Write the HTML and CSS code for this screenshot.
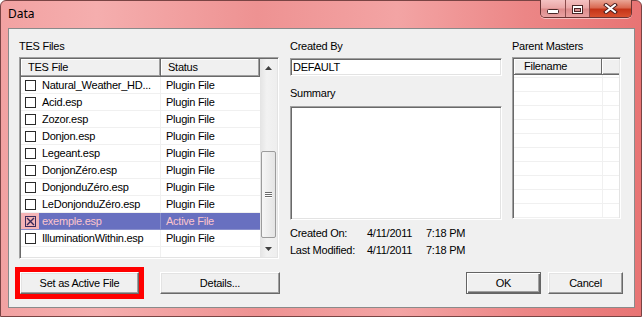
FILE: index.html
```html
<!DOCTYPE html>
<html>

<head>
    <meta charset="UTF-8">
    <title>Data</title>
    <link rel="stylesheet" href="styles.css">
</head>

<body>
    <div class="window">
        <div class="titlebar">
            <span class="title">Data</span>
            <div class="caption">
                <span class="cap-btn min">
                    <svg width="12" height="5" viewBox="0 0 12 5"><rect x=".5" y=".5" width="11" height="4" rx="1" fill="#fff" stroke="#4a2626"/></svg>
                </span>
                <span class="cap-btn max">
                    <svg width="11" height="9" viewBox="0 0 11 9"><rect x=".5" y=".5" width="10" height="8" fill="#fff" stroke="#4a2626"/><rect x="2.5" y="3.5" width="6" height="3" fill="#d89090" stroke="#4a2626"/></svg>
                </span>
                <span class="cap-btn close">
                    <svg width="15" height="11" viewBox="0 0 15 11"><path d="M3 2 L12 9 M12 2 L3 9" stroke="#4a1c1c" stroke-width="4" stroke-linecap="square"/><path d="M3 2 L12 9 M12 2 L3 9" stroke="#fff" stroke-width="2" stroke-linecap="square"/></svg>
                </span>
            </div>
        </div>

        <div class="client">
            <div class="panes">
                <div class="files">
                    <div class="label">TES Files</div>
                    <div class="listbox">
                        <div class="list-main">
                            <div class="hd"><span class="c1">TES File</span><span class="c2">Status</span></div>
                            <div class="row"><span class="c1"><i class="check"></i>Natural_Weather_HD...</span><span class="c2">Plugin File</span></div>
                            <div class="row"><span class="c1"><i class="check"></i>Acid.esp</span><span class="c2">Plugin File</span></div>
                            <div class="row"><span class="c1"><i class="check"></i>Zozor.esp</span><span class="c2">Plugin File</span></div>
                            <div class="row"><span class="c1"><i class="check"></i>Donjon.esp</span><span class="c2">Plugin File</span></div>
                            <div class="row"><span class="c1"><i class="check"></i>Legeant.esp</span><span class="c2">Plugin File</span></div>
                            <div class="row"><span class="c1"><i class="check"></i>DonjonZéro.esp</span><span class="c2">Plugin File</span></div>
                            <div class="row"><span class="c1"><i class="check"></i>DonjonduZéro.esp</span><span class="c2">Plugin File</span></div>
                            <div class="row"><span class="c1"><i class="check"></i>LeDonjonduZéro.esp</span><span class="c2">Plugin File</span></div>
                            <div class="row sel">
                                <span class="c1"><i class="check on"><svg width="11" height="11" viewBox="0 0 11 11"><rect x=".5" y=".5" width="10" height="10" fill="none" stroke="#3a2a5a"/><path d="M2 2 L9 9 M9 2 L2 9" stroke="#3a2a5a" stroke-width="1.4"/></svg></i>exemple.esp</span><span class="c2">Active File</span>
                            </div>
                            <div class="row"><span class="c1"><i class="check"></i>IlluminationWithin.esp</span><span class="c2">Plugin File</span></div>
                            <div class="row"><span class="c1"></span><span class="c2"></span></div>
                        </div>
                        <div class="scrollbar">
                            <div class="sb-btn"><svg width="7" height="4" viewBox="0 0 7 4"><path d="M3.5 0 L7 4 L0 4 Z" fill="#404040"/></svg></div>
                            <div class="sb-track">
                                <div class="thumb"><i></i><i></i><i></i></div>
                            </div>
                            <div class="sb-btn"><svg width="7" height="4" viewBox="0 0 7 4"><path d="M0 0 L7 0 L3.5 4 Z" fill="#404040"/></svg></div>
                        </div>
                    </div>
                </div>

                <div class="info">
                    <div class="label">Created By</div>
                    <div class="field">DEFAULT</div>
                    <div class="label summary-label">Summary</div>
                    <div class="summary"></div>
                    <div class="meta first"><span class="k">Created On:</span><span class="d">4/11/2011</span><span>7:18 PM</span></div>
                    <div class="meta"><span class="k">Last Modified:</span><span class="d">4/11/2011</span><span>7:18 PM</span></div>
                </div>

                <div class="masters">
                    <div class="label">Parent Masters</div>
                    <div class="mlist">
                        <div class="mhd"><span class="m1">Filename</span><span class="m2"></span></div>
                        <div class="mrow short"><span class="m1"></span><span class="m2"></span></div>
                        <div class="mrow"><span class="m1"></span><span class="m2"></span></div>
                        <div class="mrow"><span class="m1"></span><span class="m2"></span></div>
                        <div class="mrow"><span class="m1"></span><span class="m2"></span></div>
                        <div class="mrow"><span class="m1"></span><span class="m2"></span></div>
                        <div class="mrow"><span class="m1"></span><span class="m2"></span></div>
                        <div class="mrow"><span class="m1"></span><span class="m2"></span></div>
                        <div class="mrow"><span class="m1"></span><span class="m2"></span></div>
                        <div class="mrow"><span class="m1"></span><span class="m2"></span></div>
                        <div class="mrow"><span class="m1"></span><span class="m2"></span></div>
                        <div class="mrow"><span class="m1"></span><span class="m2"></span></div>
                    </div>
                </div>
            </div>

            <div class="buttons">
                <button class="btn wide marked">Set as Active File</button>
                <button class="btn wide details">Details...</button>
                <span class="spacer"></span>
                <button class="btn small default">OK</button>
                <button class="btn small cancel">Cancel</button>
            </div>
        </div>
    </div>
</body>
</html>
```

FILE: styles.css
```css
* {
    margin: 0;
    padding: 0;
    box-sizing: border-box;
}

body {
    background: #fff;
    font-family: "Liberation Sans", Arial, sans-serif;
    font-size: 11px;
    letter-spacing: -0.25px;
    color: #000;
}

.window {
    width: 642px;
    height: 317px;
    display: flex;
    flex-direction: column;
    border: 1px solid #7a4444;
    border-radius: 6px 6px 0 0;
    background: linear-gradient(to right, #f2a2a2, #f5aeae 15%, #ee9292 40%, #f3a4a4 62%, #ec8686 82%, #e87474);
}

/* title bar */
.titlebar {
    height: 27px;
    display: flex;
    justify-content: space-between;
    align-items: flex-start;
}

.title {
    padding-left: 7px;
    line-height: 25px;
    font-family: "Noto Sans", "Liberation Sans", sans-serif;
    font-size: 12px;
    letter-spacing: 0;
}

.caption {
    display: flex;
    height: 18px;
    margin-right: 9px;
    margin-top: -1px;
    border: 1px solid #6a3434;
    border-top: 0;
    border-radius: 0 0 5px 5px;
    overflow: hidden;
    box-shadow: 0 1px 0 rgba(255, 255, 255, .5);
}

.cap-btn {
    display: flex;
    justify-content: center;
    align-items: center;
    background: linear-gradient(#f4c2c2, #eaa6a6 48%, #dc8a8a 52%, #e8a2a2);
}

.cap-btn.min {
    width: 25px;
    border-right: 1px solid #8a4c4c;
    padding-top: 6px;
}

.cap-btn.max {
    width: 24px;
    border-right: 1px solid #8a4c4c;
    padding-top: 1px;
}

.cap-btn.close {
    width: 41px;
    background: linear-gradient(#eaa696, #da6a52 45%, #c43418 55%, #d8502e);
}

/* client area */
.client {
    flex: 1;
    margin: 0 6px 8px 7px;
    background: #f0f0f0;
    border: 1px solid #8a8a8a;
    padding: 11px 13px 0 10px;
}

.panes {
    display: flex;
    align-items: flex-start;
}

.label {
    height: 13px;
    line-height: 13px;
}

.files {
    width: 260px;
    margin-right: 11px;
}

.info {
    width: 212px;
    margin-right: 10px;
}

.masters {
    width: 109px;
}

/* sunken boxes */
.listbox,
.field,
.summary,
.mlist {
    background: #fff;
    border: 1px solid;
    border-color: #a0a0a0 #fff #fff #a0a0a0;
    padding: 1px;
    box-shadow: inset 1px 1px #696969, inset -1px -1px #e3e3e3;
}

.listbox {
    display: flex;
    height: 202px;
    margin-top: 4px;
}

.list-main {
    width: 239px;
    overflow: hidden;
}

.hd {
    display: flex;
    height: 18px;
}

.hd span {
    line-height: 16px;
    padding-left: 7px;
    background: #f0f0f0;
    border-right: 1px solid #696969;
    border-bottom: 1px solid #696969;
    box-shadow: inset -1px -1px #a0a0a0, inset 1px 1px #fff;
}

.c1 {
    width: 140px;
}

.c2 {
    width: 99px;
}

.row {
    display: flex;
    height: 17px;
}

.row span {
    display: flex;
    align-items: center;
    height: 17px;
    border-bottom: 1px solid #f0f0f0;
    white-space: nowrap;
}

.row .c1 {
    padding-left: 4px;
    border-right: 1px solid #f0f0f0;
}

.row .c2 {
    padding-left: 5px;
}

.check {
    display: block;
    width: 11px;
    height: 11px;
    margin-right: 6px;
    border: 1px solid #2a2a2a;
}

.check.on {
    border: 0;
}

.check svg {
    display: block;
}

.row.sel span {
    color: #fcc4cc;
    background: #6870c0;
    border-color: #8a90cc;
}

.row.sel .c1 {
    background: linear-gradient(to right, #f4b4b6 18px, #6870c0 18px);
}

/* scrollbar */
.scrollbar {
    width: 17px;
    display: flex;
    flex-direction: column;
    background: linear-gradient(to right, #e4e4e4, #f2f2f2 40%, #eeeeee);
}

.sb-btn {
    height: 17px;
    display: flex;
    justify-content: center;
    align-items: center;
}

.sb-track {
    flex: 1;
    padding: 75px 1px 0;
}

.thumb {
    height: 87px;
    border: 1px solid #9c9c9c;
    border-radius: 2px;
    background: linear-gradient(to right, #f6f6f6, #e4e4e4);
    display: flex;
    flex-direction: column;
    align-items: center;
    justify-content: center;
    gap: 1px;
}

.thumb i {
    display: block;
    width: 7px;
    height: 1px;
    background: #6a6a6a;
    box-shadow: 0 1px #fff;
}

/* middle column */
.field {
    height: 18px;
    margin-top: 5px;
    line-height: 14px;
    padding-left: 2px;
}

.summary-label {
    margin-top: 11px;
}

.summary {
    height: 114px;
    margin-top: 6px;
}

.meta {
    display: flex;
    line-height: 13px;
    margin-top: 4px;
    white-space: nowrap;
}

.meta.first {
    margin-top: 7px;
}

.meta .k {
    width: 77px;
}

.meta .d {
    width: 59px;
}

/* parent masters */
.mlist {
    height: 162px;
    margin-top: 4px;
    overflow: hidden;
}

.mhd {
    display: flex;
    height: 16px;
}

.mhd span {
    background: #f0f0f0;
    border-bottom: 1px solid #696969;
    box-shadow: inset 1px 1px #fff, inset 0 -1px #a0a0a0;
}

.mhd .m1 {
    width: 88px;
    padding-left: 10px;
    line-height: 14px;
    border-right: 1px solid #696969;
}

.mhd .m2 {
    flex: 1;
}

.mrow {
    display: flex;
    height: 14px;
}

.mrow.short {
    height: 3px;
}

.mrow span {
    border-bottom: 1px solid #f0f0f0;
}

.mrow .m1 {
    width: 89px;
    border-right: 1px solid #f0f0f0;
}

.mrow .m2 {
    flex: 1;
}

/* buttons */
.buttons {
    display: flex;
    margin: 13px -2px 0 1px;
}

.btn {
    height: 22px;
    font-family: "Liberation Sans", Arial, sans-serif;
    font-size: 11px;
    letter-spacing: -0.25px;
    color: #000;
    background: #f0f0f0;
    border: 1px solid;
    border-color: #fff #696969 #696969 #fff;
    box-shadow: inset -1px -1px #a0a0a0, inset 1px 1px #e3e3e3;
}

.btn.wide {
    width: 119px;
}

.btn.details {
    width: 120px;
    margin-left: 21px;
}

.btn.small {
    width: 75px;
}

.btn.cancel {
    margin-left: 7px;
}

.btn.default {
    border: 1px solid #646464;
    box-shadow: inset 1px 1px #fff, inset -1px -1px #696969, inset -2px -2px #a0a0a0;
}

.btn.marked {
    outline: 5px solid #f00;
}

.spacer {
    flex: 1;
}
```
